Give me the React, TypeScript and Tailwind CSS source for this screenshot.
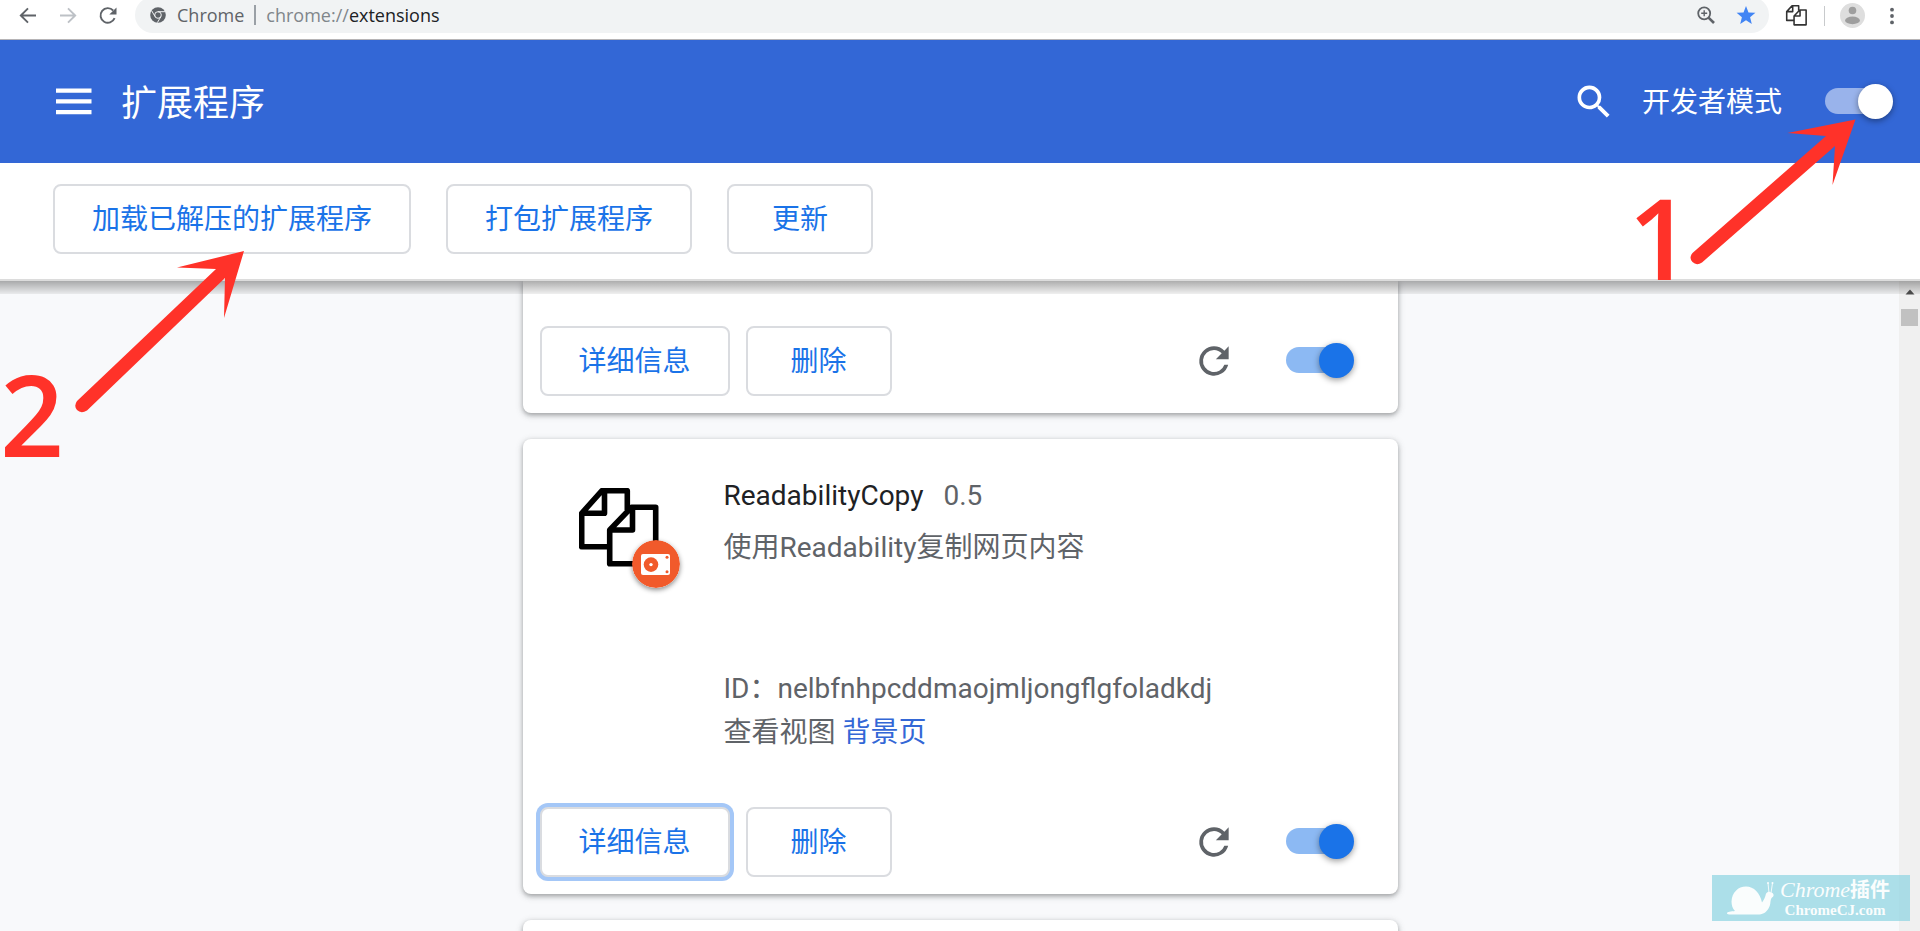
import React from "react";

const LATIN = "font-['Open_Sans','Noto_Sans_CJK_SC',sans-serif]";
const UI = "font-[Roboto,'Noto_Sans_CJK_SC',sans-serif]";

const RELOAD_PATH =
  "M17.65 6.35A7.96 7.96 0 0 0 12 4a8 8 0 1 0 7.73 10h-2.08A6 6 0 1 1 12 6c1.66 0 3.14.69 4.22 1.78L13 11h7V4z";

function PagesGlyph({ className }: { className: string }) {
  return (
    <svg
      viewBox="0 0 80 80"
      className={className}
      fill="none"
      stroke="currentColor"
      strokeLinejoin="round"
      aria-hidden="true"
    >
      <path d="M30.7 58.7H2.7V25.3L23 2.7H48.3V22M3 25.3H25.5V3" />
      <path d="M30.7 42L52.5 19.3H76.7V75.7H30.7ZM31 42H53.5V20" />
    </svg>
  );
}

function BrowserBar() {
  return (
    <div className="flex h-10 shrink-0 items-start border-b border-[#b6b4b6] bg-white pl-4 pr-4">
      <div className="flex h-8 items-center gap-4 text-[#5f6368]">
        <button aria-label="后退" className="size-6">
          <svg viewBox="0 0 24 24" className="size-6" fill="none" stroke="currentColor" strokeWidth="1.9">
            <path d="M20 11.5H4.8M12 4.3L4.8 11.5L12 18.7" />
          </svg>
        </button>
        <button aria-label="前进" className="size-6 text-[#bdc1c6]">
          <svg viewBox="0 0 24 24" className="size-6" fill="none" stroke="currentColor" strokeWidth="1.9">
            <path d="M4 11.5H19.2M12 4.3L19.2 11.5L12 18.7" />
          </svg>
        </button>
        <button aria-label="重新加载" className="size-6">
          <svg viewBox="0 0 24 24" className="size-6" aria-hidden="true">
            <path
              d="M18.6 14.2A7.3 7.3 0 1 1 17.2 6.5"
              fill="none"
              stroke="currentColor"
              strokeWidth="1.9"
            />
            <path d="M20.5 3.4V10.6H13.3Z" fill="currentColor" />
          </svg>
        </button>
      </div>

      <div
        className={`-mt-[3px] ml-[15px] flex h-9 min-w-0 flex-1 items-center rounded-full bg-[#f1f3f4] pl-[15px] pr-[11px] text-lg leading-6 ${LATIN}`}
      >
        <svg viewBox="0 0 16 16" className="size-4 shrink-0" aria-hidden="true">
          <circle cx="8" cy="8" r="7.8" fill="#5f6368" />
          <circle cx="8" cy="8" r="3.3" fill="none" stroke="#f1f3f4" strokeWidth="1" />
          <path d="M8 4.7H15M5.1 9.6L1.6 3.7M10.9 9.6L7.4 15.6" stroke="#f1f3f4" strokeWidth="1" />
        </svg>
        <span className="ml-[11px] text-[#5f6368]">Chrome</span>
        <span className="mx-[10px] h-5 w-0.5 bg-[#9aa0a6]" />
        <span className="min-w-0 flex-1 truncate text-[#202124]">
          <span className="text-[#80868b]">chrome://</span>extensions
        </span>
        <button aria-label="缩放" className="size-6 text-[#5f6368]">
          <svg viewBox="0 0 24 24" className="size-6" fill="none" stroke="currentColor">
            <circle cx="10.2" cy="10.3" r="6" strokeWidth="1.8" />
            <path d="M14.500 14.600L20 20" strokeWidth="2.6" />
            <path d="M10.2 7.300V13.300M7.200 10.300H13.200" strokeWidth="1.4" />
          </svg>
        </button>
        <button aria-label="书签" className="ml-4 size-6 text-[#4285f4]">
          <svg viewBox="0 0 24 24" className="size-6" fill="currentColor">
            <path d="M12 3l2.5 6.4 6.9.4-5.3 4.4 1.7 6.7L12 17.2l-5.8 3.7 1.7-6.7-5.3-4.4 6.9-.4z" />
          </svg>
        </button>
      </div>

      <div className="flex h-[31px] items-center pl-[17px]">
        <button aria-label="ReadabilityCopy" className="size-[21px] text-[#333333]">
          <PagesGlyph className="size-[21px] overflow-visible stroke-[6px]" />
        </button>
        <span className="ml-[17px] h-5 w-px bg-[#c8cacc]" />
        <button aria-label="用户" className="ml-[15px] size-[25px]">
          <svg viewBox="0 0 25 25" className="size-[25px]">
            <circle cx="12.5" cy="12.5" r="12.5" fill="#dedede" />
            <circle cx="12.5" cy="7.5" r="3.8" fill="#9e9e9e" />
            <ellipse cx="12.5" cy="17.4" rx="7.4" ry="3.8" fill="#9e9e9e" />
          </svg>
        </button>
        <button aria-label="菜单" className="ml-[15px] size-6 text-[#5f6368]">
          <svg viewBox="0 0 24 24" className="size-6" fill="currentColor">
            <circle cx="12" cy="5.7" r="1.9" />
            <circle cx="12" cy="12" r="1.9" />
            <circle cx="12" cy="18.4" r="1.9" />
          </svg>
        </button>
      </div>
    </div>
  );
}

function Toggle({ label, tone }: { label: string; tone: "light" | "blue" }) {
  const colors =
    tone === "light"
      ? "before:bg-white/50 after:bg-white"
      : "before:bg-[#1a73e8]/50 after:bg-[#1a73e8]";
  return (
    <input
      type="checkbox"
      role="switch"
      defaultChecked
      id={label}
      aria-label={label}
      className={`relative h-9 w-[68px] shrink-0 cursor-pointer appearance-none before:absolute before:left-0 before:top-1 before:h-[26px] before:w-[60px] before:rounded-full after:absolute after:right-0 after:top-0 after:size-[35px] after:rounded-full after:shadow-[0_2px_6px_rgba(0,0,0,0.4)] ${colors}`}
    />
  );
}

function OutlineButton({
  children,
  focused = false,
}: {
  children: React.ReactNode;
  focused?: boolean;
}) {
  return (
    <button
      className={`h-[70px] min-w-[146px] whitespace-nowrap rounded-lg border-2 border-[#dadce0] bg-white px-[37px] pt-0.5 text-[28px] leading-9 text-[#1a73e8] ${
        focused ? "shadow-[0_0_0_4px_#a4c7f7]" : ""
      }`}
    >
      {children}
    </button>
  );
}

function CardActions({ name, focused = false }: { name: string; focused?: boolean }) {
  return (
    <div className="flex items-center pb-[17px] pl-[17px] pr-11">
      <div className="flex gap-4">
        <OutlineButton focused={focused}>详细信息</OutlineButton>
        <OutlineButton>删除</OutlineButton>
      </div>
      <button aria-label="重新加载" className="ml-auto mr-[50px] size-11 text-[#5f6368]">
        <svg viewBox="0 0 24 24" className="size-11" fill="currentColor">
          <path d={RELOAD_PATH} />
        </svg>
      </button>
      <Toggle label={name} tone="blue" />
    </div>
  );
}

const CARD =
  "w-full bg-white shadow-[0_2px_4px_rgba(60,64,67,0.35),0_2px_7px_1px_rgba(60,64,67,0.18)]";

function ExtensionCard() {
  return (
    <article className={`${CARD} rounded-lg`}>
      <div className="flex pb-14 pl-14 pt-[39px]">
        <div className="relative mt-[10px] size-20 shrink-0">
          <PagesGlyph className="size-20 stroke-[5.6px] text-black" />
          <svg
            viewBox="0 0 48 48"
            className="absolute left-[53px] top-[52px] size-12 rounded-full shadow-[0_2px_5px_rgba(0,0,0,0.45)]"
            aria-hidden="true"
          >
            <circle cx="24" cy="24" r="24" fill="#f15a2b" />
            <rect x="9" y="14" width="29" height="21" rx="2" fill="#fff" />
            <circle cx="19" cy="24.6" r="7.3" fill="#f15a2b" />
            <circle cx="19" cy="24.6" r="1.7" fill="#fff" />
            <circle cx="35" cy="17.3" r="1.5" fill="#f15a2b" />
            <circle cx="35" cy="31.8" r="1.5" fill="#f15a2b" />
          </svg>
        </div>
        <div className="ml-[65px] min-w-0 text-[28px] leading-9 text-[#5f6368]">
          <div className="flex gap-5">
            <h2 className="text-[#202124]">ReadabilityCopy</h2>
            <span>0.5</span>
          </div>
          <p className="mt-4">使用Readability复制网页内容</p>
          <p className="mt-[105px]">ID：nelbfnhpcddmaojmljongflgfoladkdj</p>
          <p className="mt-2">
            查看视图{" "}
            <a href="#background" className="text-[#3367d6]">
              背景页
            </a>
          </p>
        </div>
      </div>
      <CardActions name="ReadabilityCopy 已启用" focused />
    </article>
  );
}

function Arrow({ className, kind }: { className: string; kind: "toggle" | "load" }) {
  return kind === "toggle" ? (
    <svg viewBox="0 0 166 146" className={className} aria-hidden="true">
      <path
        d="M165.5 0.5L97.5 14L136 17L2.5 134Q-1.5 139 2.5 143Q6.500 147 12 143.500L145 27L142.500 66Z"
        fill="#ff3229"
      />
    </svg>
  ) : (
    <svg viewBox="0 0 170 162" className={className} aria-hidden="true">
      <path
        d="M169 0L102 16.500L141 18L2 150Q-1.500 155 2 159Q6 163 12 159.500L150 27L149 67Z"
        fill="#ff3229"
      />
    </svg>
  );
}

function Watermark() {
  return (
    <div className="absolute bottom-[10px] right-[10px] flex h-[46px] w-[198px] items-center bg-[#93d5e3]/75 pl-[14px] text-[#fafdfd]">
      <svg viewBox="0 0 50 36" className="h-9 w-[50px] shrink-0" fill="currentColor" aria-hidden="true">
        <path d="M1 33.500C1 31.500 5 31.500 9 31C6.500 28.500 5.500 25 5.500 21.500C6 12.500 12 6.500 20 6.500C28 6.500 34 13 36 22.500C38 19.500 39 17.500 39.500 15.500C40 12 43 11 45 12.500C48 13 48.500 16 46 17.500C43.500 20 45.500 24 42.500 28.500C40 33 36 34.500 32 34.500H8C4 34.500 1 34.500 1 33.500Z" />
        <path d="M43 13L42 3M45 13L46.500 3" stroke="currentColor" strokeWidth="0.9" />
        <circle cx="42" cy="3" r="1" />
        <circle cx="46.500" cy="3" r="1" />
      </svg>
      <div className="ml-1 flex flex-col items-center whitespace-nowrap font-['Liberation_Serif','Noto_Sans_CJK_SC',serif]">
        <span className="flex items-center leading-6">
          <span className="text-[22px] italic">Chrome</span>
          <span className="text-[20px] font-bold">插件</span>
        </span>
        <span className="text-[15px] font-bold leading-4">ChromeCJ.com</span>
      </div>
    </div>
  );
}

export default function App() {
  return (
    <div className={`relative flex h-screen flex-col overflow-hidden bg-[#f8f9fb] ${UI}`}>
      <BrowserBar />

      <header className="flex h-[123px] shrink-0 items-center bg-[#3367d6] pl-14 pr-[27px] text-white">
        <button aria-label="主菜单" className="h-[27px] w-9">
          <svg viewBox="0 0 36 27" className="h-[27px] w-9" fill="currentColor">
            <path d="M0 0.500H35.500V4.800H0ZM0 11.200H35.500V15.500H0ZM0 22H35.500V26.300H0Z" />
          </svg>
        </button>
        <h1 className="ml-[29px] pt-1 text-4xl leading-10">扩展程序</h1>
        <button aria-label="搜索" className="ml-auto size-11">
          <svg viewBox="0 0 24 24" className="size-11" fill="currentColor">
            <path d="M15.500 14h-.79l-.28-.27A6.471 6.471 0 0 0 16 9.500 6.500 6.500 0 1 0 9.500 16c1.610 0 3.090-.59 4.230-1.570l.27.28v.79l5 4.990L20.490 19l-4.990-5zm-6 0C7.010 14 5 11.990 5 9.500S7.010 5 9.500 5 14 7.010 14 9.500 11.990 14 9.500 14z" />
          </svg>
        </button>
        <label htmlFor="开发者模式" className="ml-[26px] mr-[43px] pt-0.5 text-[28px] leading-9">
          开发者模式
        </label>
        <Toggle label="开发者模式" tone="light" />
      </header>

      <div className="flex shrink-0 gap-[35px] border-b-2 border-[#dcdcdc] bg-white pb-[25px] pl-[53px] pt-[21px]">
        <OutlineButton>加载已解压的扩展程序</OutlineButton>
        <OutlineButton>打包扩展程序</OutlineButton>
        <OutlineButton>更新</OutlineButton>
      </div>

      <div className="relative flex min-h-0 flex-1">
        <main className="min-w-0 flex-1 overflow-hidden pl-[21px]">
          <div className="mx-auto flex w-full max-w-[875px] flex-col gap-[26px]">
            <article className={`${CARD} rounded-b-lg pt-[45px]`}>
              <CardActions name="扩展程序已启用" />
            </article>
            <ExtensionCard />
            <article className={`${CARD} h-24 rounded-lg`} />
          </div>
        </main>
        <div className="flex w-[21px] shrink-0 flex-col items-center bg-[#f0f0f0] pt-2" aria-hidden="true">
          <svg viewBox="0 0 10 6" className="h-[6px] w-[10px]" fill="#505050">
            <path d="M5 0.500L9.500 5.500H0.500Z" />
          </svg>
          <div className="mt-[14px] size-[17px] bg-[#c1c1c1]" />
        </div>
        <div className="pointer-events-none absolute inset-x-0 top-0 h-[13px] bg-linear-to-b from-black/32 to-black/6" />
      </div>

      <Arrow kind="toggle" className="absolute right-16 top-[119px] h-[146px] w-[166px]" />
      <span className="absolute right-[228px] top-[181px] text-[112px] font-semibold leading-28 text-[#ff3229] font-['Open_Sans',sans-serif]">
        1
      </span>
      <Arrow kind="load" className="absolute left-[75px] top-[251px] h-[162px] w-[170px]" />
      <span className="absolute left-0 top-[358px] text-[112px] font-semibold leading-28 text-[#ff3229] font-['Open_Sans',sans-serif]">
        2
      </span>
      <Watermark />
    </div>
  );
}
